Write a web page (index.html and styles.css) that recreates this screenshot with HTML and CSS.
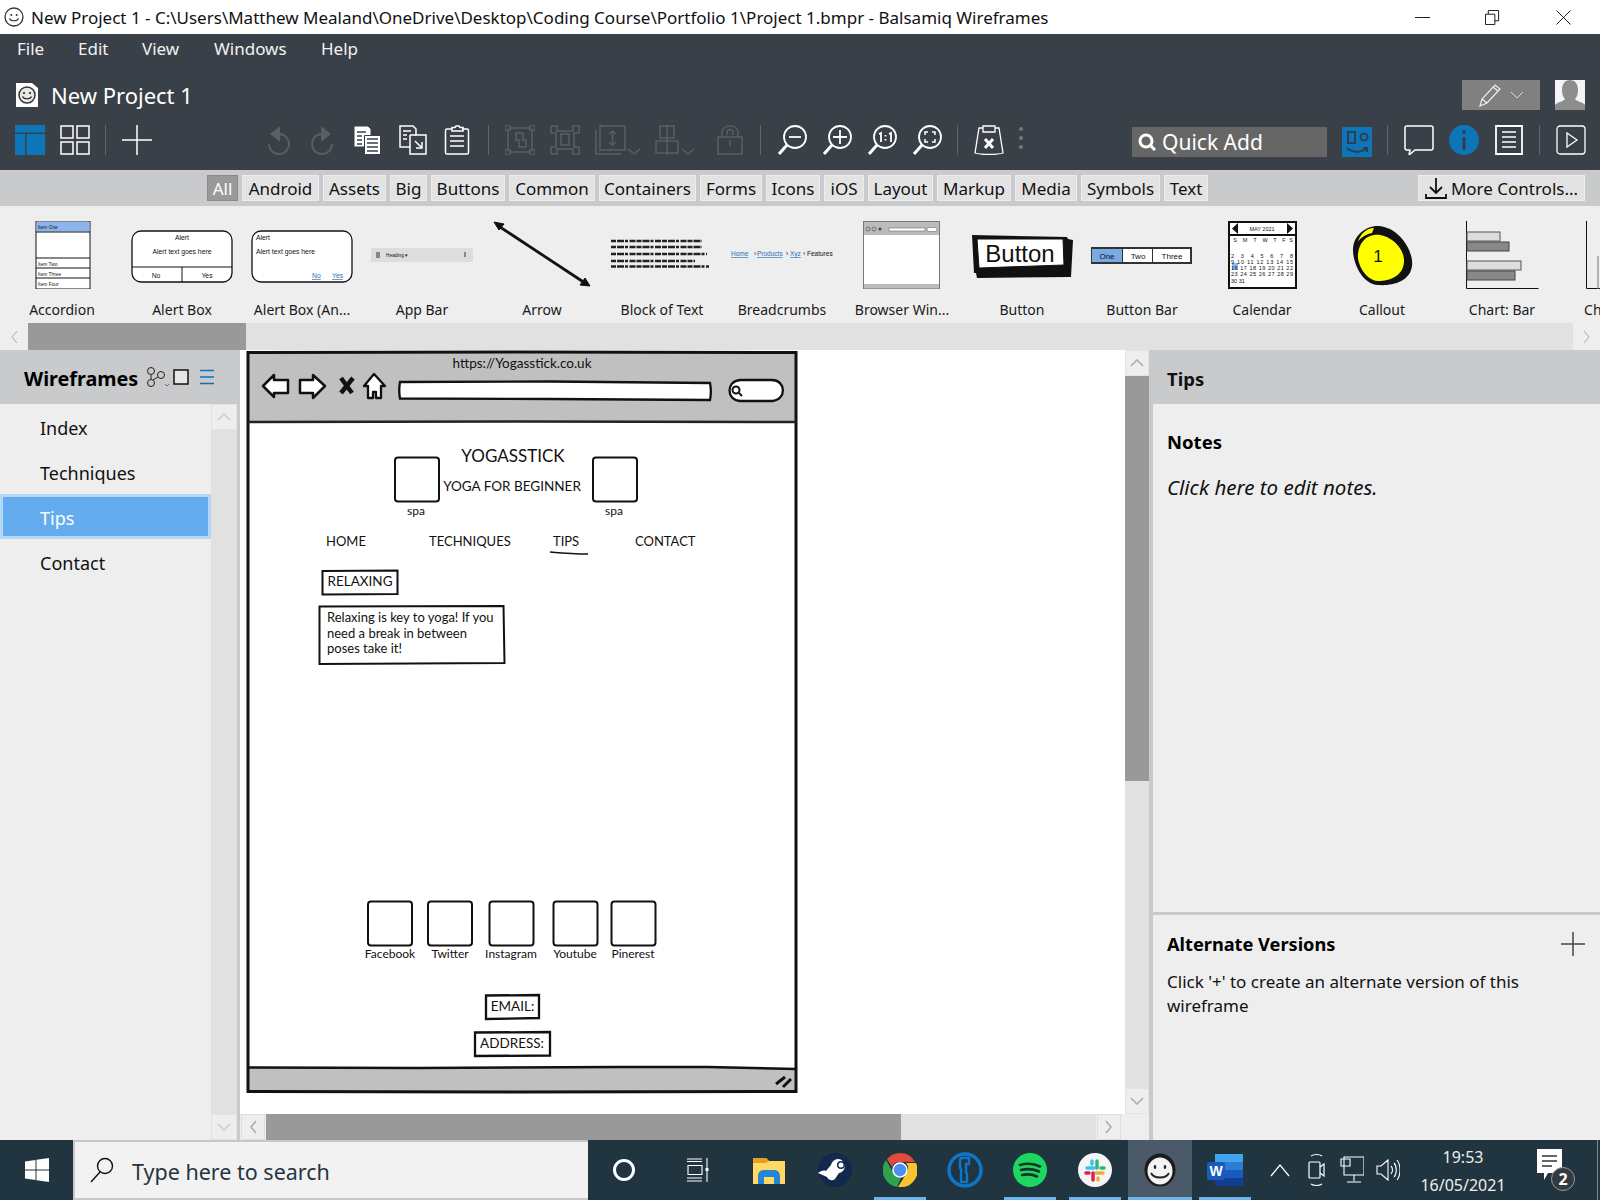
FILE: index.html
```html
<!DOCTYPE html>
<html lang="en">
<head>
<meta charset="utf-8">
<title>Balsamiq Wireframes</title>
<link rel="stylesheet" href="styles.css">
</head>
<body>
<div class="app">

<header class="titlebar">
  <svg class="title-logo" viewBox="0 0 20 20"><circle cx="10" cy="10" r="9" fill="#fff" stroke="#333" stroke-width="1.3"/><circle cx="7.3" cy="8" r="1" fill="#333"/><circle cx="12.7" cy="8" r="1" fill="#333"/><path d="M5.5 11.5c1.5 3 7.5 3 9 0" fill="none" stroke="#333" stroke-width="1.2"/></svg>
  <span class="title-text">New Project 1 - C:\Users\Matthew Mealand\OneDrive\Desktop\Coding Course\Portfolio 1\Project 1.bmpr - Balsamiq Wireframes</span>
  <div class="winctl">
    <svg class="w-min" viewBox="0 0 16 16"><path d="M0 8h16" stroke="#111" stroke-width="1"/></svg>
    <svg class="w-res" viewBox="0 0 16 16"><path d="M.5 4.500h10v11H.5zM3.500 4.500V.5h11v11h-4" fill="none" stroke="#111"/></svg>
    <svg class="w-cls" viewBox="0 0 16 16"><path d="M.5.5l15 15M15.500.5l-15 15" stroke="#111" fill="none"/></svg>
  </div>
</header>

<section class="chrome">
  <nav class="menu"><span class="m1">File</span><span class="m2">Edit</span><span class="m3">View</span><span class="m4">Windows</span><span class="m5">Help</span></nav>
  <div class="project">
    <svg class="proj-logo" viewBox="0 0 22 24"><path d="M0 0h16l6 5v19H0z" fill="#fff"/><circle cx="11" cy="12" r="8" fill="#e8e8e8" stroke="#333" stroke-width="1.5"/><circle cx="8" cy="10" r="1.100" fill="#222"/><circle cx="14" cy="10" r="1.100" fill="#222"/><path d="M6.500 13.500c1.500 3 7.500 3 9 0" stroke="#222" fill="none" stroke-width="1.200"/></svg>
    <span class="proj-name">New Project 1</span>
    <div class="edit-mode"><svg width="26" height="26" viewBox="0 0 26 26"><path d="M2 24l2-7L17 3l5 4L9 21zM4 17l5 4M15 5l5 4" fill="none" stroke="#eee" stroke-width="1.200"/></svg><svg width="14" height="8" viewBox="0 0 14 8"><path d="M1 1l6 6 6-6" fill="none" stroke="#ddd"/></svg></div>
    <svg class="avatar" viewBox="0 0 30 30"><rect width="30" height="30" fill="#f4f4f4"/><path d="M0 30v-5c2-3 8-3 10-6-2-2-3-5-3-9 0-6 3-10 8-10s8 4 8 10c0 4-1 7-3 9 2 3 8 3 10 6v5z" fill="#8d8d8d"/></svg>
  </div>
  <div class="toolbar">
    <svg class="ti" viewBox="0 0 30 30"><path d="M0 0h30v7.500H0zM0 9h10v21H0zM11.500 9H30v21H11.500z" fill="#0e76b8"/></svg>
    <svg class="ti" viewBox="0 0 30 30"><path d="M1 1h12v12H1zM17 1h12v12H17zM1 17h12v12H1zM17 17h12v12H17z" fill="none" stroke="#fff" stroke-width="1.500"/></svg>
    <i class="sep"></i>
    <svg class="ti" viewBox="0 0 30 30"><path d="M15 0v30M0 15h30" stroke="#fff" stroke-width="1.500"/></svg>

    <svg class="ti undo" viewBox="0 0 30 30"><path d="M17 9a10 10 0 1 1-10 10" fill="none" stroke="#5b5f63" stroke-width="1.800" transform="translate(-1 0)"/><path d="M17 1v16L7 9z" fill="#5b5f63"/></svg>
    <svg class="ti" viewBox="0 0 30 30"><path d="M13 9a10 10 0 1 0 10 10" fill="none" stroke="#5b5f63" stroke-width="1.800" transform="translate(1 0)"/><path d="M13 1v16l10-8z" fill="#5b5f63"/></svg>
    <svg class="ti" viewBox="0 0 30 30"><path d="M1 1h14l3 3v6h9v19H11v-7H1z" fill="#fff" stroke="#394047"/><path d="M11.500 10.500h16v19h-16z" fill="#fff" stroke="#394047"/><path d="M4 7h9M4 11h5M4 15h5M4 19h5M14 14h11M14 18h11M14 22h11M14 26h11" stroke="#394047" stroke-width="1.500"/></svg>
    <svg class="ti" viewBox="0 0 30 30"><path d="M2 1h13l3 3v6h10v19H12v-7H2z" fill="none" stroke="#fff" stroke-width="1.500"/><path d="M12 10h6M12 10v12" stroke="#fff" stroke-width="1.500"/><path d="M5 6h8M5 10h4M5 14h4M17 16l7 7M24 17v6h-6" fill="none" stroke="#fff" stroke-width="1.500"/></svg>
    <svg class="ti" viewBox="0 0 30 30"><path d="M9 4H4c-1 0-1.500.5-1.500 1.500v22c0 1 .5 1.500 1.500 1.500h20c1 0 1.500-.5 1.500-1.500v-22c0-1-.5-1.500-1.500-1.500h-5M9 6V2.500h3L13 1h3l1 1.500h3V6z" fill="none" stroke="#fff" stroke-width="1.500"/><path d="M7 11h14M7 16h14M7 21h14" stroke="#fff" stroke-width="1.500"/></svg>
    <i class="sep"></i>
    <svg class="ti" viewBox="0 0 30 30"><path d="M5 3h20M5 27h20M3 5v20M27 5v20M0 0h5v5H0zM25 0h5v5h-5zM0 25h5v5H0zM25 25h5v5h-5zM11 8h7v7h3v7h-7v-7h-3z" fill="none" stroke="#5b5f63" stroke-width="1.500"/></svg>
    <svg class="ti" viewBox="0 0 30 30"><path d="M1 1h6v5h16V1h6v7h-5v14h5v7h-6v-5H7v5H1v-7h5V8H1zM11 9h8v11h-8z" fill="none" stroke="#5b5f63" stroke-width="1.500"/></svg>
    <svg class="ti wide" viewBox="0 0 45 30"><path d="M5 1h25v24H5zM1 5v24h25M17.500 6v14M14 9l3.500-3 3.500 3M14 17l3.500 3 3.500-3M33 24l6 5 6-5" fill="none" stroke="#5b5f63" stroke-width="1.500"/></svg>
    <svg class="ti wide" viewBox="0 0 45 30"><path d="M5 1h14v12H5zM1 16h22v12H1zM12 0v30M27 24l6 5 6-5" fill="none" stroke="#5b5f63" stroke-width="1.500"/></svg>
    <svg class="ti" viewBox="0 0 30 30"><path d="M7 12V7c0-8 16-8 16 0v5M3 12h24v17H3zM15 15v6M12 10V7c0-3 6-3 6 0v3" fill="none" stroke="#5b5f63" stroke-width="1.500"/></svg>
    <i class="sep"></i>
    <svg class="ti" viewBox="0 0 30 30"><circle cx="18" cy="12" r="11" fill="none" stroke="#fff" stroke-width="1.800"/><path d="M10 20L2 29" stroke="#fff" stroke-width="3"/><path d="M12 12h12" stroke="#fff" stroke-width="1.800"/></svg>
    <svg class="ti" viewBox="0 0 30 30"><circle cx="18" cy="12" r="11" fill="none" stroke="#fff" stroke-width="1.800"/><path d="M10 20L2 29" stroke="#fff" stroke-width="3"/><path d="M11 12h14M18 5v14" stroke="#fff" stroke-width="1.800"/></svg>
    <svg class="ti" viewBox="0 0 30 30"><circle cx="18" cy="12" r="11" fill="none" stroke="#fff" stroke-width="1.800"/><path d="M10 20L2 29" stroke="#fff" stroke-width="3"/><path d="M12 9l2-1v9M22 9l2-1v9M18.500 10v1.500M18.500 14v1.500" fill="none" stroke="#fff" stroke-width="1.800"/></svg>
    <svg class="ti" viewBox="0 0 30 30"><circle cx="18" cy="12" r="11" fill="none" stroke="#fff" stroke-width="1.800"/><path d="M10 20L2 29" stroke="#fff" stroke-width="3"/><path d="M13 10V7h3M20 7h3v3M23 14v3h-3M16 17h-3v-3" fill="none" stroke="#fff" stroke-width="1.500"/></svg>
    <i class="sep"></i>
    <svg class="ti" viewBox="0 0 30 30"><path d="M9 3H5L1 28c6 2 22 2 28 0L25 3h-4M9 1h12v6H9z" fill="none" stroke="#fff" stroke-width="1.300"/><path d="M11 14l8 9M19 14l-8 9" stroke="#fff" stroke-width="3"/></svg>
    <svg class="dots" viewBox="0 0 6 30"><circle cx="3" cy="4" r="2" fill="#777"/><circle cx="3" cy="13" r="2" fill="#777"/><circle cx="3" cy="22" r="2" fill="#777"/></svg>
    <div class="quick"><svg width="18" height="18" viewBox="0 0 18 18"><circle cx="8" cy="8" r="6" fill="none" stroke="#fff" stroke-width="3"/><path d="M12 12l5 5" stroke="#fff" stroke-width="3"/></svg><span>Quick Add</span></div>
    <svg class="ti ti-gap" viewBox="0 0 30 30"><rect width="30" height="30" fill="#0e76b8"/><path d="M6 5h7v11H6z" fill="none" stroke="#2c3e50" stroke-width="2"/><circle cx="22" cy="10" r="3.500" fill="none" stroke="#2c3e50" stroke-width="2"/><path d="M5 21c6 5 14 5 20 0M21 21h4v4" fill="none" stroke="#2c3e50" stroke-width="2"/></svg>
    <i class="sep"></i>
    <svg class="ti" viewBox="0 0 30 30"><path d="M3 1h24c1 0 2 1 2 2v20c0 1-1 2-2 2H11l-6 5 1-5H3c-1 0-2-1-2-2V3c0-1 1-2 2-2z" fill="none" stroke="#fff" stroke-width="1.500"/></svg>
    <svg class="ti" viewBox="0 0 30 30"><circle cx="15" cy="15" r="15" fill="#0e76b8"/><path d="M13.500 12h3v13h-3zM13.500 5h3v3.500h-3z" fill="#2c3e50"/></svg>
    <svg class="ti" viewBox="0 0 30 30"><path d="M2 1h26v28H2z" fill="none" stroke="#fff" stroke-width="1.800"/><path d="M8 7h14M8 12h14M8 17h14M8 22h14" stroke="#fff" stroke-width="1.500"/></svg>
    <i class="sep"></i>
    <svg class="ti" viewBox="0 0 30 30"><rect x="1" y="1" width="28" height="28" rx="3" fill="none" stroke="#fff" stroke-width="1.300"/><path d="M11 8l10 7-10 7z" fill="none" stroke="#fff" stroke-width="1.300"/></svg>
  </div>
</section>

<div class="cats">
  <div class="cat-grid">
    <span class="cat active">All</span><span class="cat">Android</span><span class="cat">Assets</span><span class="cat">Big</span><span class="cat">Buttons</span><span class="cat">Common</span><span class="cat">Containers</span><span class="cat">Forms</span><span class="cat">Icons</span><span class="cat">iOS</span><span class="cat">Layout</span><span class="cat">Markup</span><span class="cat">Media</span><span class="cat">Symbols</span><span class="cat">Text</span>
  </div>
  <span class="cat more"><svg width="22" height="24" viewBox="0 0 22 24"><path d="M11 2v15M5 11l6 6 6-6M1 18v4h20v-4" fill="none" stroke="#111" stroke-width="1.800"/></svg>More Controls...</span>
</div>

<section class="library">
  <figure class="lib"><svg viewBox="2 221 120 68"><path d="M36 221h54v68H36z" fill="#fff" stroke="#111"/><rect x="36.500" y="222" width="53" height="9.500" fill="#8cb4ee"/><path d="M36 232h54M36 258h54M36 268h54M36 278h54" stroke="#111"/><text x="38" y="229" class="t3">Item One</text><text x="38" y="266" class="t3">Item Two</text><text x="38" y="276" class="t3">Item Three</text><text x="38" y="286" class="t3">Item Four</text></svg><figcaption>Accordion</figcaption></figure>
  <figure class="lib"><svg viewBox="122 221 120 68"><rect x="132" y="231" width="100" height="51" rx="9" fill="#fff" stroke="#111" stroke-width="1.300"/><path d="M132 267h100M182 267v15" stroke="#111"/><text x="182" y="240" class="t5 c">Alert</text><text x="182" y="254" class="t5 c">Alert text goes here</text><text x="156" y="278" class="t5 c">No</text><text x="207" y="278" class="t5 c">Yes</text></svg><figcaption>Alert Box</figcaption></figure>
  <figure class="lib"><svg viewBox="242 221 120 68"><rect x="252" y="231" width="100" height="51" rx="9" fill="#fff" stroke="#111" stroke-width="1.300"/><text x="256" y="240" class="t5">Alert</text><text x="256" y="254" class="t5">Alert text goes here</text><text x="312" y="278" class="t5 lnk">No</text><text x="332" y="278" class="t5 lnk">Yes</text></svg><figcaption>Alert Box (An...</figcaption></figure>
  <figure class="lib"><svg viewBox="362 221 120 68"><rect x="371" y="248" width="102" height="14" fill="#ddd"/><path d="M376 253h4M376 255h4M376 257h4M465 252v5" stroke="#333"/><text x="386" y="257" class="t3">Heading ▾</text></svg><figcaption>App Bar</figcaption></figure>
  <figure class="lib"><svg viewBox="482 221 120 68"><path d="M497 225l91 60" stroke="#111" stroke-width="2.800"/><path d="M494 222l10 2-5 6zM590 286l-10-1 5-7z" fill="#111" stroke="#111"/></svg><figcaption>Arrow</figcaption></figure>
  <figure class="lib"><svg viewBox="602 221 120 68"><g stroke="#222" stroke-width="2.600" stroke-dasharray="5 1 7 1 3 1.500 6 1"><path d="M611 241h91M611 247h91M611 254h96M611 261h84M611 266.500h98"/></g></svg><figcaption>Block of Text</figcaption></figure>
  <figure class="lib"><svg viewBox="722 221 120 68"><text x="731" y="256" class="t6 lnk">Home</text><text x="754" y="256" class="t6">›</text><text x="757" y="256" class="t6 lnk">Products</text><text x="786" y="256" class="t6">›</text><text x="790" y="256" class="t6 lnk">Xyz</text><text x="803" y="256" class="t6">›</text><text x="807" y="256" class="t6">Features</text></svg><figcaption>Breadcrumbs</figcaption></figure>
  <figure class="lib"><svg viewBox="842 221 120 68"><rect x="863.500" y="221.500" width="76" height="67" fill="#fff" stroke="#777"/><rect x="864" y="222" width="75" height="13" fill="#bbb"/><rect x="864" y="284" width="75" height="4.500" fill="#bbb"/><rect x="889" y="228" width="36" height="3" fill="#fff" stroke="#555" stroke-width=".5"/><rect x="927" y="227.500" width="10" height="4" rx="2" fill="#fff" stroke="#555" stroke-width=".5"/><circle cx="868" cy="229" r="2" fill="none" stroke="#444" stroke-width=".6"/><circle cx="874" cy="229" r="2" fill="none" stroke="#444" stroke-width=".6"/><circle cx="880" cy="229" r="1.500" fill="#444"/></svg><figcaption>Browser Win...</figcaption></figure>
  <figure class="lib"><svg viewBox="962 221 120 68"><path d="M972 235l95 2 1 2 5 1-2 37-94 1-1-5-2 0z" fill="#111"/><path d="M977 239l86 0 1 26-85 3z" fill="#fff" stroke="#111" stroke-width="1"/><text x="1020" y="262" class="tb c">Button</text></svg><figcaption>Button</figcaption></figure>
  <figure class="lib"><svg viewBox="1082 221 120 68"><rect x="1091" y="247" width="101" height="17" fill="#333"/><rect x="1092" y="249" width="30" height="13" fill="#7aaae6"/><rect x="1123" y="249" width="29" height="13" fill="#fff"/><rect x="1153" y="249" width="37" height="13" fill="#fff"/><text x="1107" y="258.500" class="t7 c">One</text><text x="1138" y="258.500" class="t7 c">Two</text><text x="1172" y="258.500" class="t7 c">Three</text></svg><figcaption>Button Bar</figcaption></figure>
  <figure class="lib"><svg viewBox="1202 221 120 68"><rect x="1229" y="222" width="67" height="66" fill="#fff" stroke="#111" stroke-width="2"/><path d="M1229 235h67" stroke="#111" stroke-width="2"/><path d="M1238 223v11l-6-5.500zM1287 223v11l6-5.500z" fill="#111"/><text x="1262" y="231" class="t4 c">MAY 2021</text><rect x="1232" y="263" width="6" height="7" fill="#8cb4ee"/><text x="1235" y="242" class="t4 c"><tspan x="1235">S</tspan><tspan x="1245">M</tspan><tspan x="1255">T</tspan><tspan x="1265">W</tspan><tspan x="1275">T</tspan><tspan x="1284">F</tspan><tspan x="1291">S</tspan></text><text x="1231" y="258" class="t4" textLength="62">2 3 4 5 6 7 8</text><text x="1231" y="264" class="t4" textLength="62">9 10 11 12 13 14 15</text><text x="1231" y="270" class="t4" textLength="62">16 17 18 19 20 21 22</text><text x="1231" y="276" class="t4" textLength="62">23 24 25 26 27 28 29</text><text x="1231" y="283" class="t4">30 31</text></svg><figcaption>Calendar</figcaption></figure>
  <figure class="lib"><svg viewBox="1322 221 120 68"><path d="M1378 226c22 1 36 26 34 40-2 16-20 20-34 19-16-1-25-22-25-35 0-14 12-24 25-24z" fill="#111"/><path d="M1374 235c14-2 31 12 30 27-1 14-14 19-26 19-12-1-21-16-20-27 1-10 7-18 16-19z" fill="#ff0"/><path d="M1358 242c2-8 9-14 16-14l-2 5c-6 1-12 5-14 9z" fill="#ff0"/><text x="1378" y="262" class="t14 c">1</text></svg><figcaption>Callout</figcaption></figure>
  <figure class="lib"><svg viewBox="1442 221 120 68"><path d="M1466.500 221v67.500h72" fill="none" stroke="#111"/><rect x="1467" y="232" width="33" height="9" fill="#ddd" stroke="#555"/><rect x="1467" y="242" width="42" height="9" fill="#888" stroke="#444"/><rect x="1467" y="261" width="54" height="9" fill="#ddd" stroke="#555"/><rect x="1467" y="271" width="48" height="9" fill="#888" stroke="#444"/></svg><figcaption>Chart: Bar</figcaption></figure>
  <figure class="lib"><svg viewBox="1562 221 120 68"><path d="M1586.500 221v67.500h20" fill="none" stroke="#111"/><path d="M1598 289v-33" stroke="#777"/></svg><figcaption>Chart: Col...</figcaption></figure>
</section>

<div class="hscroll top">
  <span class="arrow-l"><svg width="8" height="14" viewBox="0 0 8 14"><path d="M7 1L2 7l5 6" fill="none" stroke="#aaa"/></svg></span>
  <span class="thumb top-thumb"></span>
  <span class="arrow-r"><svg width="8" height="14" viewBox="0 0 8 14"><path d="M1 1l5 6-5 6" fill="none" stroke="#aaa"/></svg></span>
</div>

<main class="workspace">
  <aside class="left">
    <div class="left-head">
      <h2>Wireframes</h2>
      <svg class="lh-branch" viewBox="0 0 24 20"><circle cx="5" cy="4" r="3.500" fill="none" stroke="#222"/><circle cx="5" cy="16" r="3.500" fill="none" stroke="#222"/><circle cx="15" cy="8" r="3.500" fill="none" stroke="#222"/><path d="M5 8v4M12 10l-5 3" stroke="#222"/><path d="M19 17l2 2 2-2" fill="none" stroke="#555" stroke-width=".8"/></svg>
      <svg class="lh-square" viewBox="0 0 16 16"><rect x="1" y="1" width="14" height="14" fill="#e6e6e6" stroke="#111" stroke-width="1.500"/></svg>
      <svg class="lh-menu" viewBox="0 0 14 16"><path d="M0 1.500h14M0 8h14M0 14.500h14" stroke="#0e76b8" stroke-width="1.500"/></svg>
    </div>
    <div class="left-body">
      <ul class="pages">
        <li>Index</li><li>Techniques</li><li class="sel">Tips</li><li>Contact</li>
      </ul>
      <div class="vscroll narrow">
        <span class="vbtn"><svg width="14" height="8" viewBox="0 0 14 8"><path d="M1 7l6-6 6 6" fill="none" stroke="#ccc" stroke-width="1.500"/></svg></span>
        <span class="vfill"></span>
        <span class="vbtn"><svg width="14" height="8" viewBox="0 0 14 8"><path d="M1 1l6 6 6-6" fill="none" stroke="#ccc" stroke-width="1.500"/></svg></span>
      </div>
    </div>
  </aside>

  <section class="center">
    <div class="center-top">
      <div class="canvas">
        <svg class="wire" viewBox="240 350 885 764">
          <rect x="248" y="353" width="548" height="739" fill="#fff"/>
          <rect x="248" y="353" width="548" height="69" fill="#c0c0c0"/>
          <rect x="248" y="1068" width="548" height="24" fill="#c0c0c0"/>
          <path d="M248 352.500l274-.5 274 .5v739l-274 .5-274-.5z" fill="none" stroke="#111" stroke-width="3"/>
          <path d="M248 422l274-.5 274 .5" fill="none" stroke="#222" stroke-width="2.500"/>
          <path d="M248 1067.500l170 .5 200-1 90 0 88 2" fill="none" stroke="#111" stroke-width="2.500"/>
          <text x="522" y="368" class="w13 c">https://Yogasstick.co.uk</text>
          <path d="M263 386l11-11v5h14v13h-14v4z" fill="#fff" stroke="#111" stroke-width="2.500" stroke-linejoin="round"/>
          <path d="M325 386l-12-11v5h-13v13h13v5z" fill="#fff" stroke="#111" stroke-width="2.500" stroke-linejoin="round"/>
          <path d="M341 378l11 15M353 378l-12 15" stroke="#111" stroke-width="4.500"/>
          <path d="M374 374l-10 12h4v12h5v-6h3v6h5v-12h4z" fill="#fff" stroke="#111" stroke-width="2.300" stroke-linejoin="round"/>
          <path d="M400 382l150-.5 160 1.500c1 5 1 12 0 17l-160-1-150-.5c-1-5-1-11 0-16.500z" fill="#fff" stroke="#111" stroke-width="2.300"/>
          <path d="M740 380h32c14 0 15 20 0 21h-32c-14-1-14-20 0-21z" fill="#fff" stroke="#111" stroke-width="2.300"/>
          <circle cx="736" cy="390" r="3.500" fill="none" stroke="#111" stroke-width="2"/><path d="M739 393l3 3" stroke="#111" stroke-width="2"/>
          <text x="513" y="462" class="w16 c">YOGASSTICK</text>
          <rect x="395" y="457.500" width="44" height="44" rx="3" fill="#fff" stroke="#111" stroke-width="2"/>
          <rect x="593" y="457.500" width="44" height="44" rx="3" fill="#fff" stroke="#111" stroke-width="2"/>
          <text x="512" y="490.500" class="w13 c">YOGA FOR BEGINNER</text>
          <text x="416" y="515" class="w12 c">spa</text><text x="614" y="515" class="w12 c">spa</text>
          <text x="326" y="545.500" class="w13n">HOME</text><text x="429" y="545.500" class="w13n">TECHNIQUES</text><text x="553" y="545.500" class="w13n">TIPS</text><text x="635" y="545.500" class="w13n">CONTACT</text>
          <path d="M550 552c12 1 26 2 38 2" fill="none" stroke="#111" stroke-width="1.500"/>
          <path d="M322.500 571l75-.5v23.500l-75 .5z" fill="#fff" stroke="#111" stroke-width="2"/>
          <text x="360" y="586" class="w13 c">RELAXING</text>
          <path d="M319.500 606.500l184-.5 1 57-185 1z" fill="#fff" stroke="#111" stroke-width="2"/>
          <text x="327" y="622" class="w12b">Relaxing is key to yoga! If you</text>
          <text x="327" y="638" class="w12b">need a break in between</text>
          <text x="327" y="653" class="w12b">poses take it!</text>
          <rect x="368" y="901.500" width="44" height="44" rx="3" fill="#fff" stroke="#111" stroke-width="2"/>
          <rect x="428" y="901.500" width="44" height="44" rx="3" fill="#fff" stroke="#111" stroke-width="2"/>
          <rect x="489.500" y="901.500" width="44" height="44" rx="3" fill="#fff" stroke="#111" stroke-width="2"/>
          <rect x="553.500" y="901.500" width="44" height="44" rx="3" fill="#fff" stroke="#111" stroke-width="2"/>
          <rect x="611.500" y="901.500" width="44" height="44" rx="3" fill="#fff" stroke="#111" stroke-width="2"/>
          <text x="390" y="958" class="w12 c">Facebook</text><text x="450" y="958" class="w12 c">Twitter</text><text x="511" y="958" class="w12 c">Instagram</text><text x="575" y="958" class="w12 c">Youtube</text><text x="633" y="958" class="w12 c">Pinerest</text>
          <path d="M486 995.500l53-.5v23l-53 1z" fill="#fff" stroke="#111" stroke-width="2.300"/>
          <text x="512.500" y="1011" class="w13 c">EMAIL:</text>
          <path d="M475 1032.500l75-.5v23.500l-75 .5z" fill="#fff" stroke="#111" stroke-width="2.300"/>
          <text x="512" y="1047.500" class="w13 c">ADDRESS:</text>
          <path d="M776 1084l9-7M783 1087l8-8" stroke="#111" stroke-width="3"/>
        </svg>
      </div>
      <div class="vscroll">
        <span class="vbtn"><svg width="14" height="8" viewBox="0 0 14 8"><path d="M1 7l6-6 6 6" fill="none" stroke="#aaa" stroke-width="1.500"/></svg></span>
        <span class="vthumb"></span>
        <span class="vfill"></span>
        <span class="vbtn"><svg width="14" height="8" viewBox="0 0 14 8"><path d="M1 1l6 6 6-6" fill="none" stroke="#aaa" stroke-width="1.500"/></svg></span>
      </div>
    </div>
    <div class="hscroll bottom">
      <span class="hbtn"><svg width="8" height="14" viewBox="0 0 8 14"><path d="M7 1L2 7l5 6" fill="none" stroke="#aaa" stroke-width="1.500"/></svg></span>
      <span class="thumb bottom-thumb"></span>
      <span class="hfill"></span>
      <span class="hbtn"><svg width="8" height="14" viewBox="0 0 8 14"><path d="M1 1l5 6-5 6" fill="none" stroke="#aaa" stroke-width="1.500"/></svg></span>
    </div>
  </section>

  <aside class="right">
    <h2 class="right-head">Tips</h2>
    <div class="notes">
      <h3>Notes</h3>
      <p class="hint">Click here to edit notes.</p>
    </div>
    <div class="alts">
      <div class="alts-head"><h3>Alternate Versions</h3><svg width="24" height="24" viewBox="0 0 24 24"><path d="M12 0v24M0 12h24" stroke="#444" stroke-width="1.500"/></svg></div>
      <p>Click '+' to create an alternate version of this wireframe</p>
    </div>
  </aside>
</main>

<footer class="taskbar">
  <div class="start"><svg width="24" height="24" viewBox="0 0 24 24"><path d="M0 3.500l10.500-1.500v9.500H0zM11.500 1.800L24 0v11.500H11.500zM0 12.500h10.500V22L0 20.500zM11.500 12.500H24V24l-12.500-1.800z" fill="#fff"/></svg></div>
  <div class="search"><svg width="24" height="26" viewBox="0 0 24 26"><circle cx="15" cy="9" r="7.500" fill="none" stroke="#111" stroke-width="1.400"/><path d="M10 15L1 25" stroke="#111" stroke-width="1.400"/></svg><span>Type here to search</span></div>
  <div class="tasks">
    <div class="tk tk-a"><svg width="24" height="24" viewBox="0 0 24 24"><circle cx="12" cy="12" r="9.500" fill="none" stroke="#fff" stroke-width="3"/></svg></div>
    <div class="tk tk-b"><svg width="24" height="24" viewBox="0 0 24 24"><path d="M2 1h15M2 3.500h15M3 7.500h14v9H3zM2 20h15M2 23h15M22 0v24" fill="none" stroke="#fff" stroke-width="1.100"/><rect x="20.500" y="10" width="3" height="3" fill="#fff"/></svg></div>
    <div class="tk tk-c"><svg width="32" height="28" viewBox="0 0 32 28"><path d="M0 2h13l3 3h16v23H0z" fill="#ffd866"/><path d="M0 2h13l3 3-3 2H0z" fill="#e0a020"/><path d="M5 28v-8c0-4 3-6 6-6h10c3 0 6 2 6 6v8h-6v-7H11v7z" fill="#2186d8"/></svg></div>
    <div class="tk"><svg width="34" height="34" viewBox="0 0 34 34"><circle cx="17" cy="17" r="17" fill="#10294d"/><path d="M0 20l9 4a5 5 0 0 0 8 2l4-6a7 7 0 1 0-8-8l-5 6c-3-1-5 0-8 2z" fill="#fff"/><circle cx="23" cy="12" r="4" fill="#10294d"/><circle cx="23" cy="12" r="2.500" fill="#fff"/></svg></div>
    <div class="tk on"><svg width="34" height="34" viewBox="0 0 34 34"><path d="M17 0a17 17 0 0 1 15 9H17a8 8 0 0 0-8 5L4 6a17 17 0 0 1 13-6z" fill="#e04a3f"/><path d="M3 7l8 14a8 8 0 0 0 7 4l-4 9A17 17 0 0 1 3 7z" fill="#2fa24f"/><path d="M33 10a17 17 0 0 1-18 24l8-13a8 8 0 0 0 0-11z" fill="#f8c32c"/><circle cx="17" cy="17" r="7" fill="#4e8ef0" stroke="#fff" stroke-width="1.500"/></svg></div>
    <div class="tk"><svg width="36" height="36" viewBox="0 0 36 36"><circle cx="18" cy="18" r="16" fill="none" stroke="#0e76c8" stroke-width="3.500"/><path d="M14 6h8v6h-3v8c0 1 1 1 1 2v8h-6V17l-1-1V8z" fill="none" stroke="#0e76c8" stroke-width="2.500"/></svg></div>
    <div class="tk on"><svg width="34" height="34" viewBox="0 0 34 34"><circle cx="17" cy="17" r="17" fill="#1ed760"/><path d="M7 12c7-2 14-1.500 20 1.500M8 17c6-1.500 12-1 18 1.500M9 22c5-1 10-1 15 1.500" fill="none" stroke="#14342a" stroke-width="2.600" stroke-linecap="round"/></svg></div>
    <div class="tk on"><svg width="34" height="34" viewBox="0 0 34 34"><circle cx="17" cy="17" r="17" fill="#f5f5f5"/><path d="M9 15h7" stroke="#36c5f0" stroke-width="3.500" stroke-linecap="round"/><path d="M14 8v3" stroke="#36c5f0" stroke-width="3.500" stroke-linecap="round"/><path d="M19 8v7" stroke="#2eb67d" stroke-width="3.500" stroke-linecap="round"/><path d="M23 15h3" stroke="#2eb67d" stroke-width="3.500" stroke-linecap="round"/><path d="M18 20h7" stroke="#ecb22e" stroke-width="3.500" stroke-linecap="round"/><path d="M20 25v2" stroke="#ecb22e" stroke-width="3.500" stroke-linecap="round"/><path d="M15 20v7" stroke="#e01e5a" stroke-width="3.500" stroke-linecap="round"/><path d="M8 20h3" stroke="#e01e5a" stroke-width="3.500" stroke-linecap="round"/></svg></div>
    <div class="tk on cur"><svg width="32" height="34" viewBox="0 0 32 34"><ellipse cx="16" cy="17" rx="15.500" ry="16.500" fill="#1c1c1c"/><ellipse cx="16" cy="18" rx="12.500" ry="13.500" fill="#f4f4f4"/><ellipse cx="11" cy="14" rx="1.300" ry="2" fill="#222"/><ellipse cx="21" cy="14" rx="1.300" ry="2" fill="#222"/><path d="M7 20c3 6 15 6 18 0" fill="none" stroke="#222" stroke-width="1.800"/></svg></div>
    <div class="tk on"><svg width="36" height="32" viewBox="0 0 36 32"><rect x="8" y="0" width="28" height="32" rx="2" fill="#2b7cd3"/><rect x="8" y="0" width="28" height="8" fill="#41a5ee"/><rect x="8" y="16" width="28" height="8" fill="#185abd"/><rect x="8" y="24" width="28" height="8" fill="#103f91"/><rect x="0" y="8" width="18" height="18" rx="2" fill="#185abd"/><text x="9" y="22" class="wordw">W</text></svg></div>
  </div>
  <div class="tray">
    <svg class="tr-1" width="20" height="14" viewBox="0 0 20 14"><path d="M1 13L10 2l9 11" fill="none" stroke="#fff" stroke-width="1.200"/></svg>
    <svg class="tr-2" width="17" height="34" viewBox="0 0 17 34"><rect x="1" y="9" width="11" height="16" rx="1" fill="none" stroke="#fff" stroke-width="1.200"/><path d="M12 14l4-3v12l-4-3M3 3c3-2 8-2 11 0M3 31c3 2 8 2 11 0" fill="none" stroke="#fff" stroke-width="1.200"/></svg>
    <svg class="tr-3" width="24" height="28" viewBox="0 0 24 28"><path d="M4 1h20v18H4zM4 10h-3V3h9v7H4zM14 19v6M7 26h14" fill="none" stroke="#fff" stroke-width="1.100"/></svg>
    <svg class="tr-4" width="24" height="28" viewBox="0 0 24 28"><path d="M1 10h4l7-6v20l-7-6H1zM15 10c2 2 2 6 0 8M18 7c3 3 3 11 0 14M21 4c4 5 4 15 0 20" fill="none" stroke="#fff" stroke-width="1.100"/></svg>
    <div class="clock"><span>19:53</span><span>16/05/2021</span></div>
    <div class="notif">
      <svg width="26" height="32" viewBox="0 0 26 32"><path d="M0 0h25v24H11l-4 7v-7H0z" fill="#fff"/><path d="M5 7h15M5 12h15M5 17h10" stroke="#333" stroke-width="1.300"/></svg>
      <span class="badge">2</span>
    </div>
    <i class="tr-edge"></i>
  </div>
</footer>
</div>
</body>
</html>
```

FILE: styles.css
```css
* { box-sizing: border-box; }
html, body { margin: 0; padding: 0; }
body { font-family: "Noto Sans", "Liberation Sans", sans-serif; color: #111; background: #fff; }
.app { width: 1600px; height: 1200px; display: flex; flex-direction: column; overflow: hidden; }
h2, h3, p, ul, figure { margin: 0; padding: 0; }

/* title bar */
.titlebar { height: 34px; flex: none; display: flex; align-items: center; padding-left: 4px; background: #fff; }
.title-logo { width: 20px; height: 20px; margin-right: 7px; }
.title-text { font-size: 17px; white-space: nowrap; }
.winctl { margin-left: auto; display: flex; align-items: center; }
.winctl svg { width: 15px; height: 15px; display: block; }
.w-min { margin-right: 55px; }
.w-res { margin-right: 56px; }
.w-cls { margin-right: 29px; }

/* dark chrome */
.chrome { flex: none; height: 136px; background: #394047; color: #fff; display: flex; flex-direction: column; }
.menu { height: 28px; flex: none; display: flex; align-items: center; font-size: 17px; padding-left: 17px; color: #f2f2f2; }
.m1 { width: 61px; } .m2 { width: 64px; } .m3 { width: 72px; } .m4 { width: 107px; }
.project { height: 30px; margin-top: 18px; flex: none; display: flex; align-items: center; padding: 0 15px 0 16px; }
.proj-logo { width: 22px; height: 24px; margin-right: 13px; }
.proj-name { font-size: 22px; line-height: 30px; }
.edit-mode { margin-left: auto; width: 78px; height: 30px; background: #808080; display: flex; align-items: center; justify-content: center; gap: 6px; }
.avatar { width: 30px; height: 30px; margin-left: 15px; }
.toolbar { height: 30px; margin-top: 15px; flex: none; display: flex; align-items: center; gap: 15px; padding-left: 15px; }
.ti { width: 30px; height: 30px; flex: none; display: block; }
.ti.wide { width: 45px; }
.undo { margin-left: 96px; }
.sep { width: 1px; height: 30px; background: #60666c; flex: none; margin-right: 1px; }
.dots { width: 6px; height: 30px; flex: none; margin-left: -1px; }
.quick { width: 195px; height: 30px; margin-left: 93px; background: #666; display: flex; align-items: center; gap: 6px; padding-left: 6px; font-size: 21px; color: #fff; flex: none; position: relative; top: 2px; }
.ti-gap { position: relative; top: 2px; }

/* category strip */
.cats { height: 36px; flex: none; background: #c9cacc; display: flex; align-items: center; padding: 0 15px 0 207px; }
.cat-grid { display: grid; grid-template-columns: 31px 77px 63px 37px 74px 86px 97px 62px 54px 40px 65px 74px 62px 79px 44px; gap: 4px; }
.cat { height: 26px; background: #e3e3e3; border: 1px solid #ececec; display: flex; align-items: center; justify-content: center; font-size: 17px; white-space: nowrap; }
.cat.active { background: #999; border-color: #8a8a8a; color: #fff; }
.more { margin-left: auto; width: 167px; gap: 4px; }

/* library */
.library { height: 117px; flex: none; background: #eee; display: flex; padding: 15px 0 0 2px; overflow: hidden; }
.lib { width: 120px; flex: none; display: flex; flex-direction: column; align-items: center; }
.lib svg { width: 120px; height: 68px; display: block; flex: none; }
.lib figcaption { margin-top: 11px; font-size: 14px; line-height: 20px; white-space: nowrap; color: #1a1a1a; }
svg text { font-family: "Liberation Sans", sans-serif; fill: #111; }
.t3 { font-size: 4.800px; }
.t4 { font-size: 5.500px; }
.t5 { font-size: 6.800px; }
.t6 { font-size: 6.500px; }
.t7 { font-size: 8px; }
.t14 { font-size: 17px; }
.tb { font-size: 24px; }
.c { text-anchor: middle; }
svg text.lnk { fill: #2a6fb5; text-decoration: underline; }

/* scrollbars */
.hscroll { display: flex; flex: none; background: #e1e1e1; }
.hscroll.top { height: 27px; }
.arrow-l { width: 28px; background: #eee; display: flex; align-items: center; justify-content: center; }
.arrow-r { width: 27px; background: #eee; margin-left: auto; display: flex; align-items: center; justify-content: center; }
.thumb { background: #999; display: block; }
.top-thumb { width: 218px; }

/* workspace */
.workspace { flex: 1; min-height: 0; display: grid; grid-template-columns: 240px 913px 447px; }
.left { background: #c9cacc; display: flex; flex-direction: column; padding-right: 3px; }
.left-head { height: 54px; flex: none; display: flex; align-items: center; padding-left: 24px; }
.left-head h2 { font-size: 19.800px; font-weight: 700; color: #000; width: 122px; white-space: nowrap; padding-top: 3px; }
.lh-branch { width: 24px; height: 20px; }
.lh-square { width: 16px; height: 16px; margin-left: 3px; }
.lh-menu { width: 14px; height: 16px; margin-left: 11px; }
.left-body { flex: 1; min-height: 0; display: flex; }
.pages { width: 211px; background: #eee; list-style: none; }
.pages li { height: 45px; display: flex; align-items: center; padding: 2px 0 0 40px; font-size: 18px; }
.pages li.sel { background: #63adef; border: 3px solid #b3d7f7; padding: 2px 0 0 37px; color: #fff; }
.vscroll { display: flex; flex-direction: column; width: 24px; background: #e1e1e1; flex: none; }
.vscroll.narrow { width: 26px; }
.vbtn { height: 26px; flex: none; background: #eee; border: 1px solid #e3e3e3; display: flex; align-items: center; justify-content: center; }
.vfill { flex: 1; }
.vthumb { height: 405px; background: #999; flex: none; }

.center { display: flex; flex-direction: column; border-right: 4px solid #c9cacc; background: #eee; min-height: 0; }
.center-top { flex: 1; min-height: 0; display: flex; }
.canvas { width: 885px; flex: none; background: #fff; position: relative; overflow: hidden; }
.wire { width: 885px; height: 764px; display: block; }
.wire text { font-family: Lato, "Noto Sans", sans-serif; }
.w12 { font-size: 12px; }
.w12b { font-size: 13px; }
.w13 { font-size: 13.500px; }
.w13n { font-size: 13px; }
.w16 { font-size: 17px; }
.hscroll.bottom { height: 26px; background: #eee; }
.hbtn { width: 24px; flex: none; background: #eee; border: 1px solid #ddd; display: flex; align-items: center; justify-content: center; margin: 0 1px; }
.bottom-thumb { width: 635px; flex: none; }
.hfill { flex: 0 0 195px; background: #e1e1e1; }

/* right panel */
.right { background: #eee; display: flex; flex-direction: column; }
.right-head { height: 54px; flex: none; background: #c9cacc; display: flex; align-items: center; padding: 3px 0 0 14px; font-size: 18.500px; font-weight: 700; color: #111; }
.notes { flex: 1; min-height: 0; padding: 26px 14px 0; border-bottom: 3px solid #c9cacc; }
.notes h3 { font-size: 18.500px; line-height: 24px; color: #000; }
.hint { font-size: 20.500px; font-style: italic; line-height: 28px; margin-top: 19px; }
.alts { flex: none; height: 225px; padding: 15px 15px 0 14px; }
.alts-head { display: flex; justify-content: space-between; align-items: center; height: 28px; }
.alts-head h3 { font-size: 18.200px; color: #000; }
.alts p { font-size: 17px; line-height: 24px; margin-top: 12px; }

/* taskbar */
.taskbar { height: 60px; flex: none; background: #20353f; display: flex; align-items: center; color: #fff; }
.start { width: 73px; height: 60px; flex: none; display: flex; align-items: center; justify-content: center; }
.search { width: 515px; height: 60px; flex: none; background: #f2f2f2; border: 2px solid #c8c8c8; border-right: 0; display: flex; align-items: center; padding-left: 15px; gap: 18px; color: #25343f; font-size: 21.500px; }
.search span { padding-top: 2px; }
.tasks { display: flex; gap: 1px; height: 60px; flex: none; }
.tk { width: 64px; height: 60px; display: flex; align-items: center; justify-content: center; position: relative; flex: none; }
.tk-a { width: 72px; } .tk-b { width: 71px; } .tk-c { width: 69px; padding-left: 3px; }
.tk.on::after { content: ""; position: absolute; left: 6px; right: 6px; bottom: 0; height: 3px; background: #6eb4ec; }
.tk.cur { background: #4a5a68; }
.tk.cur::after { left: 0; right: 0; }
svg text.wordw { font-size: 14px; font-weight: 700; fill: #fff; text-anchor: middle; }
.tray { flex: 1; display: flex; align-items: center; height: 60px; }
.tr-1 { margin-left: 13px; }
.tr-2 { margin-left: 18px; }
.tr-3 { margin-left: 15px; }
.tr-4 { margin-left: 12px; }
.clock { width: 100px; margin-left: 13px; height: 60px; display: flex; flex-direction: column; align-items: center; justify-content: space-between; padding: 5px 0 3px; font-size: 16px; line-height: 24px; color: #eee; }
.notif { margin-left: 24px; width: 38px; height: 42px; position: relative; }
.badge { position: absolute; right: 0; bottom: 0; width: 24px; height: 24px; border-radius: 50%; background: #333b40; border: 1px solid #999; color: #fff; font-size: 16px; font-weight: 700; display: flex; align-items: center; justify-content: center; }
.tr-edge { width: 1px; height: 60px; background: #7c8990; margin-left: auto; margin-right: 2px; }
```
